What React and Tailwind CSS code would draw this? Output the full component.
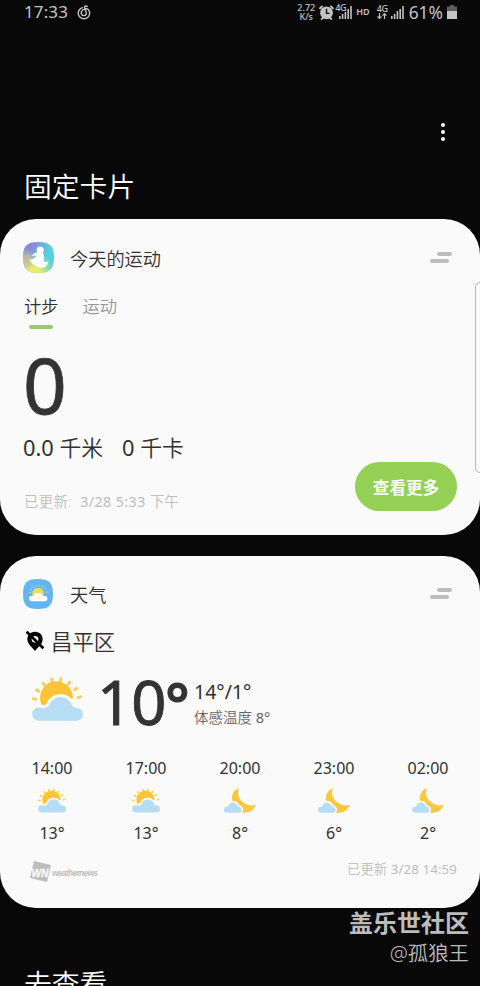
import React from 'react';

const hours = [
  { time: '14:00', temp: '13°', icon: 'day' },
  { time: '17:00', temp: '13°', icon: 'day' },
  { time: '20:00', temp: '8°', icon: 'night' },
  { time: '23:00', temp: '6°', icon: 'night' },
  { time: '02:00', temp: '2°', icon: 'night' },
];

const rayAngles = [-171, -148.5, -126, -103.5, -81, -58.5, -36, -13.5];

const squircle = 'M46 0 C80 0 92 12 92 46 C92 80 80 92 46 92 C12 92 0 80 0 46 C0 12 12 0 46 0 Z';

const DAY_CLOUD =
  'M20 130 A19.5 19.5 0 0 1 20 91 Q28 91 34 94 Q46 92 51 84 A36 36 0 0 1 119 84 Q123 92 133 92 A19 19 0 0 1 133 130 Z';

const SunCloud = ({ className }) => (
  <svg viewBox="0 0 152 131" className={className}>
    {rayAngles.map((angle) => (
      <rect
        key={angle}
        x="60"
        y="-4.5"
        width="16"
        height="9"
        rx="4"
        fill="#fbcf5f"
        transform={`translate(75 76) rotate(${angle})`}
      />
    ))}
    <path d="M28 81 A49 49 0 1 1 122 62 L100 90 L40 90 Z" fill="#fdc536" />
    <path d={DAY_CLOUD} fill="#b5ddf3" stroke="#fafafa" strokeWidth="18" paintOrder="stroke" />
  </svg>
);

const MoonCloud = ({ className }) => (
  <svg viewBox="0 0 96 74" className={className}>
    <path
      d="M45 0 C29 5 22 20 24 36 C26 60 40 74 60 74 C78 74 90 65 96 50 C84 54 71 52 60 44 C44 33 38 17 45 0 Z"
      fill="#f9c740"
    />
    <path
      d="M9 74 A9 9 0 0 1 9 56 Q13 56 14 52 A14 14 0 0 1 40 51 Q41 55 44 56 A9 9 0 0 1 43 74 Z"
      fill="#b5ddf3"
      stroke="#fafafa"
      strokeWidth="10"
      paintOrder="stroke"
    />
  </svg>
);

const HealthIcon = () => (
  <svg viewBox="0 0 92 92" className="w-[31px] h-[31px]">
    <defs>
      <radialGradient id="hPurple" cx="0.15" cy="0.05" r="0.7">
        <stop offset="0.2" stopColor="#8c86d6" />
        <stop offset="1" stopColor="#8c86d6" stopOpacity="0" />
      </radialGradient>
      <radialGradient id="hYellow" cx="0.35" cy="1.05" r="0.75">
        <stop offset="0.3" stopColor="#eaed68" />
        <stop offset="1" stopColor="#b9e28a" stopOpacity="0" />
      </radialGradient>
      <radialGradient id="hOrange" cx="0" cy="0.58" r="0.4">
        <stop offset="0" stopColor="#e3b394" />
        <stop offset="1" stopColor="#e3b394" stopOpacity="0" />
      </radialGradient>
    </defs>
    <path d={squircle} fill="#55cfe2" />
    <path d={squircle} fill="url(#hPurple)" />
    <path d={squircle} fill="url(#hYellow)" />
    <path d={squircle} fill="url(#hOrange)" />
    <circle cx="51" cy="24" r="10.5" fill="#fff" />
    <path
      d="M42 31 Q50 30 59 31 Q64 42 61 55 Q67 64 76 56 Q73 76 54 77 Q32 75 19 52 Q32 52 40 42 Q32 38 25 43 Q32 31 42 31 Z"
      fill="#fff"
    />
  </svg>
);

const WeatherIcon = () => (
  <svg viewBox="0 0 92 92" className="mt-px mr-px w-[30px] h-[30px]">
    <path d={squircle} fill="#64b5f4" />
    {rayAngles.map((angle) => (
      <rect
        key={angle}
        x="23"
        y="-1.5"
        width="6"
        height="3"
        rx="1.5"
        fill="#d8e08a"
        transform={`translate(47 46) rotate(${angle})`}
      />
    ))}
    <circle cx="46" cy="45" r="18" fill="#e9dc62" />
    <path
      d="M26 68 A8 8 0 0 1 26 52 L32 52 A15 15 0 0 1 60 52 L67 52 A8 8 0 0 1 67 68 Z"
      fill="#fff"
    />
  </svg>
);

const LocationOff = () => (
  <svg viewBox="0 0 54 60" className="mt-[-2px] w-[18px] h-5">
    <path d="M27 2 C12 2 4 13 4 25 C4 37 15 47 27 60 C39 47 50 38 50 25 C50 13 42 2 27 2 Z" fill="#000" />
    <circle cx="27" cy="25" r="10" fill="#fafafa" />
    <path d="M2 2 L52 52" stroke="#000" strokeWidth="8" />
  </svg>
);

const Signal = ({ className }) => (
  <svg viewBox="0 0 13 13" className={className} fill="#c4c4c4">
    <rect x="0" y="10" width="1.6" height="3" />
    <rect x="2.8" y="8" width="1.6" height="5" />
    <rect x="5.6" y="5" width="1.6" height="8" />
    <rect x="8.4" y="3" width="1.6" height="10" />
    <rect x="11.2" y="0" width="1.6" height="13" />
  </svg>
);

const StatusBar = () => (
  <div className="flex h-6 items-center pl-[24px] pr-[23px] text-[#c4c4c4]">
    <span className="w-[45px] text-[17px] leading-6 tracking-[0.1px]">17:33</span>
    <svg viewBox="0 0 14 15" className="ml-2 h-[15px] w-[14px]" fill="none" stroke="#c4c4c4" strokeWidth="1.4" strokeLinecap="round">
      <path d="M5.4 2.6 A5.7 5.7 0 1 0 11.6 4.8 C10 3.2 6 3.4 4.6 6.2 C3.6 8.6 5 10.6 7 10.6 C9 10.5 9.8 8.6 9 6.8 C8.4 5.2 7.4 3.6 7.6 2.2 C7.8 0.8 9.4 0.6 10.2 1.4" />
    </svg>
    <div className="ml-auto flex items-center">
      <div className="flex w-[20px] flex-col text-center text-[9px] font-medium leading-[9px]">
        <span>2.72</span>
        <span>K/s</span>
      </div>
      <svg viewBox="0 0 14 14" className="ml-[3px] h-[15px] w-[15px]">
        <circle cx="7" cy="7.3" r="6" fill="#c4c4c4" />
        <path d="M0.4 3.6 L3.4 0.8 M13.6 3.6 L10.6 0.8 M2 13.6 L4 11.6 M12 13.6 L10 11.6" stroke="#c4c4c4" strokeWidth="1.8" />
        <path d="M7 3.6 V7.8 H9.8" fill="none" stroke="#080808" strokeWidth="1.3" />
      </svg>
      <div className="relative ml-px h-[14px] w-[17px]">
        <Signal className="absolute bottom-0 right-0 h-[13px] w-[13px]" />
        <span className="absolute left-0 top-[-1px] bg-[#080808] text-[9px] font-medium leading-[8px] tracking-[-0.4px]">4G</span>
      </div>
      <span className="ml-[4px] text-[9px] font-semibold leading-6">HD</span>
      <div className="ml-[7px] flex w-[12px] flex-col">
        <span className="text-[9px] font-medium leading-[8px] tracking-[-0.4px]">4G</span>
        <svg viewBox="0 0 10 6" className="h-[6px] w-[10px]" fill="none" stroke="#c4c4c4" strokeWidth="1.2">
          <path d="M2.5 0 V5.4 M0.5 3.4 L2.5 5.4 L4.5 3.4 M7.5 6 V0.6 M5.5 2.6 L7.5 0.6 L9.5 2.6" />
        </svg>
      </div>
      <Signal className="ml-[2px] h-[13px] w-[13px]" />
      <span className="ml-[5px] text-[17.4px] leading-6">61%</span>
      <svg viewBox="0 0 10 14" className="ml-[4px] h-[14px] w-[10px]">
        <path d="M3 0 H7 V1.5 H10 V6 H0 V1.5 H3 Z" fill="#5c5c5c" />
        <rect x="0" y="6" width="10" height="8" fill="#c4c4c4" />
      </svg>
    </div>
  </div>
);

const CardHeader = ({ icon, title }) => (
  <div className="flex h-[31px] items-center">
    {icon}
    <h2 className="ml-[16px] mt-[3px] text-[18.2px] font-[350] leading-[31px] text-[#303030]">{title}</h2>
    <div className="ml-auto mr-[4px] flex w-[22px] flex-col gap-[3px]">
      <span className="ml-auto h-1 w-[15px] rounded-full bg-[#bdbdbd]" />
      <span className="h-1 w-[19px] rounded-full bg-[#bdbdbd]" />
    </div>
  </div>
);

const StepsCard = () => (
  <section className="h-[316px] rounded-[36px] bg-[#fafafa] pl-[23px] pr-6 pt-[23px]">
    <CardHeader icon={<HealthIcon />} title="今天的运动" />
    <div className="mt-[20px] flex gap-6 pl-px text-[17.3px] font-[350] leading-[28px]">
      <div className="flex flex-col items-center text-[#303030]">
        计步
        <span className="mt-[4px] h-1 w-6 rounded-full bg-[#9cc872]" />
      </div>
      <div className="text-[#979797]">运动</div>
    </div>
    <div className="mt-[20px] h-[70px] text-[76.5px] leading-[70px] text-[#333] [-webkit-text-stroke:0.8px_#333]">0</div>
    <div className="mt-[15px] flex gap-[19px] text-[21.8px] font-[350] leading-[28px] text-[#303030]">
      <p>
        <span className="font-normal">0.0</span> 千米
      </p>
      <p>
        <span className="font-normal">0</span> 千卡
      </p>
    </div>
    <div className="mt-px flex justify-between">
      <p className="mt-[29px] pl-px text-[14.3px] font-[350] leading-[20px] tracking-[0.4px] text-[#bdbdbd]">
        已更新:&nbsp; <span className="font-normal">3/28 5:33</span> 下午
      </p>
      <button className="mr-[-1px] mt-[-1px] h-[49px] w-[102px] rounded-full bg-[#94d053] text-[16.6px] font-bold leading-[51px] text-[#fafafa]">
        查看更多
      </button>
    </div>
  </section>
);

const WeatherCard = () => (
  <section className="mt-[21px] h-[352px] rounded-[36px] bg-[#fafafa] pt-[22px] text-[#303030]">
    <div className="pl-[23px] pr-6">
      <CardHeader icon={<WeatherIcon />} title="天气" />
      <div className="mt-[18px] flex h-[30px] items-center pl-[3px]">
        <LocationOff />
        <span className="ml-[7px] text-[21.4px] font-[350] leading-[30px]">昌平区</span>
      </div>
      <div className="mt-[14px] flex h-[60px] items-center pl-[9px]">
        <SunCloud className="mt-[-4px] h-[44px] w-[51px]" />
        <span className="ml-[14px] mt-[2px] w-[97px] text-[61.5px] leading-[60px] tracking-[-1px] text-[#333] [-webkit-text-stroke:0.9px_#333]">
          10<span className="text-[57px] font-semibold">°</span>
        </span>
        <div className="mt-[5px] flex flex-col">
          <span className="text-[19.5px] leading-[26px]">14°/1°</span>
          <span className="text-[14.5px] font-[350] leading-[24px] text-[#666]">
            体感温度 <span className="font-normal">8°</span>
          </span>
        </div>
      </div>
    </div>
    <div className="mx-[5px] mt-[25px] grid grid-cols-5">
      {hours.map((hour) => (
        <div key={hour.time} className="flex flex-col items-center">
          <span className="text-[16px] leading-6">{hour.time}</span>
          <div className="flex h-[41px] items-center">
            {hour.icon === 'day' ? (
              <SunCloud className="mt-[-1px] h-[25px] w-[28px]" />
            ) : (
              <MoonCloud className="mt-[-1px] h-[25px] w-[32px]" />
            )}
          </div>
          <span className="text-[16px] leading-6">{hour.temp}</span>
        </div>
      ))}
    </div>
    <div className="mt-[14px] flex pl-[30px] pr-[23px]">
      <div className="mt-[2px] flex items-center">
        <svg viewBox="0 0 21 21" className="h-[21px] w-[21px]">
          <path d="M4 0 L21 4 L17 21 L0 17 Z" fill="#bdbdbd" />
          <text
            x="1.5"
            y="15.5"
            fill="#fafafa"
            stroke="#fafafa"
            strokeWidth="0.3"
            className="font-['Liberation_Sans'] text-[10px] font-bold italic"
            textLength="17"
            lengthAdjust="spacingAndGlyphs"
          >
            WN
          </text>
        </svg>
        <span className="mt-[5px] ml-[1px] font-['Liberation_Sans'] text-[8.2px] font-bold italic leading-none tracking-[-0.55px] text-[#bdbdbd]">
          weathernews
        </span>
      </div>
      <span className="ml-auto text-[13.3px] font-[350] leading-[20px] tracking-[0.1px] text-[#bdbdbd]">
        已更新 <span className="font-normal">3/28 14:59</span>
      </span>
    </div>
  </section>
);

const App = () => (
  <main className="relative h-[986px] w-[480px] overflow-hidden bg-[#080808] font-['Noto_Sans','Noto_Sans_CJK_SC',sans-serif]">
    <StatusBar />
    <div className="flex h-[195px] flex-col px-6">
      <div className="mt-[99px] mr-[11px] flex flex-col gap-[3px] self-end">
        <span className="h-1 w-1 rounded-full bg-white" />
        <span className="h-1 w-1 rounded-full bg-white" />
        <span className="h-1 w-1 rounded-full bg-white" />
      </div>
      <h1 className="mt-[25px] text-[27.8px] font-[350] leading-[40px] text-white">固定卡片</h1>
    </div>
    <StepsCard />
    <WeatherCard />
    <div className="flex flex-col pr-[11px] text-right text-[#bcbcbc]">
      <span className="text-[24px] font-bold leading-[29px]">盖乐世社区</span>
      <span className="mt-[2px] text-[20.4px] font-[350] leading-[28px]">@孤狼王</span>
    </div>
    <h1 className="mt-[-4px] pl-6 text-[27.8px] font-[350] leading-[40px] text-white">去查看</h1>

    {/* edge panel handle */}
    <div className="absolute right-[-6px] top-[282px] h-[191px] w-[11px] rounded-[5px] border border-[#b5b5b5]" />
  </main>
);

export default App;
